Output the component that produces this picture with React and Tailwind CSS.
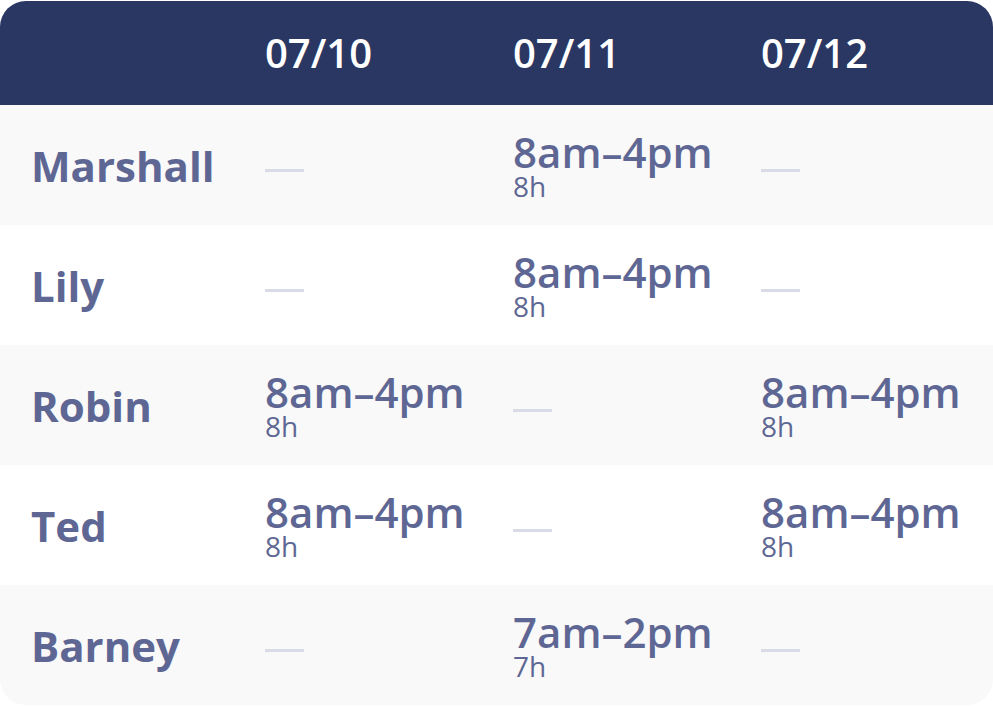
import React from "react";

const rows = [
  { name: "Marshall", cells: [null, ["8am–4pm", "8h"], null] },
  { name: "Lily", cells: [null, ["8am–4pm", "8h"], null] },
  { name: "Robin", cells: [["8am–4pm", "8h"], null, ["8am–4pm", "8h"]] },
  { name: "Ted", cells: [["8am–4pm", "8h"], null, ["8am–4pm", "8h"]] },
  { name: "Barney", cells: [null, ["7am–2pm", "7h"], null] },
];

function Cell({ v, last }) {
  return (
    <div className={last ? "flex-1 flex items-center" : "w-[248px] flex items-center"}>
      {v ? (
        <div className="flex flex-col pt-[4px]">
          <span className="text-[42px] font-semibold leading-[38px]">{v[0]}</span>
          <span className="text-[28px] leading-[30px]">{v[1]}</span>
        </div>
      ) : (
        <div className="w-[39px] h-[3px] bg-[#d9dce7] mt-[10px]" />
      )}
    </div>
  );
}

export default function App() {
  return (
    <div className="w-[993px] h-[706px] bg-white pt-[1px]" style={{ fontFamily: '"Open Sans", sans-serif' }}>
      <div className="w-full rounded-[26px] overflow-hidden text-[#5e6794]">
        <div className="h-[104px] bg-[#293762] flex items-center text-white text-[40px] font-semibold">
          <div className="w-[265px]" />
          <div className="w-[248px]">07/10</div>
          <div className="w-[248px]">07/11</div>
          <div className="flex-1">07/12</div>
        </div>
        {rows.map((r, i) => (
          <div key={r.name} className={`h-[120px] flex items-stretch ${i % 2 === 0 ? "bg-[#f9f9f9]" : "bg-white"}`}>
            <div className="w-[265px] pl-[31px] flex items-center text-[42px] font-bold">{r.name}</div>
            <Cell v={r.cells[0]} />
            <Cell v={r.cells[1]} />
            <Cell v={r.cells[2]} last />
          </div>
        ))}
      </div>
    </div>
  );
}
